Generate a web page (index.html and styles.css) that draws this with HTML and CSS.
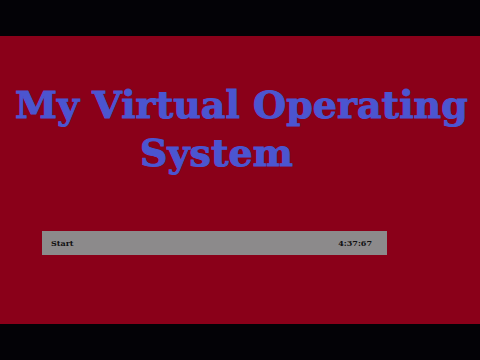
FILE: index.html
```html
<!DOCTYPE html>
<html>
<head>
<meta charset="utf-8">
<link rel="stylesheet" href="styles.css">
</head>
<body>
<div class="screen">
  <div class="stage">
    <h1 class="title">
      <span class="line1">My Virtual Operating</span>
      <span class="line2">System</span>
    </h1>
    <div class="taskbar">
      <span class="start">Start</span>
      <span class="clock">4:37:67</span>
    </div>
  </div>
</div>
</body>
</html>
```
FILE: styles.css
```css
html, body {
  margin: 0;
  padding: 0;
  background: #030206;
}
.screen {
  width: 480px;
  height: 360px;
  display: flex;
  flex-direction: column;
  justify-content: center;
}
.stage {
  height: 288px;
  background: #8a0019;
  display: flex;
  flex-direction: column;
}
.title {
  margin: 0;
  padding-top: 45px;
  font-family: "DejaVu Serif", serif;
  font-weight: bold;
  font-size: 38px;
  line-height: 48px;
  color: #4b55d0;
  -webkit-text-stroke: 1px #4b55d0;
  display: flex;
  flex-direction: column;
}
.line1 {
  padding-left: 15px;
  white-space: nowrap;
}
.line2 {
  padding-left: 140px;
}
.taskbar {
  margin-top: 54px;
  margin-left: 42px;
  width: 345px;
  height: 24px;
  background: #8c8a8b;
  display: flex;
  align-items: center;
  justify-content: space-between;
  padding: 0 15px 0 9px;
  box-sizing: border-box;
  font-family: "DejaVu Serif", serif;
  font-weight: bold;
  font-size: 8px;
  color: #111;
}
```
